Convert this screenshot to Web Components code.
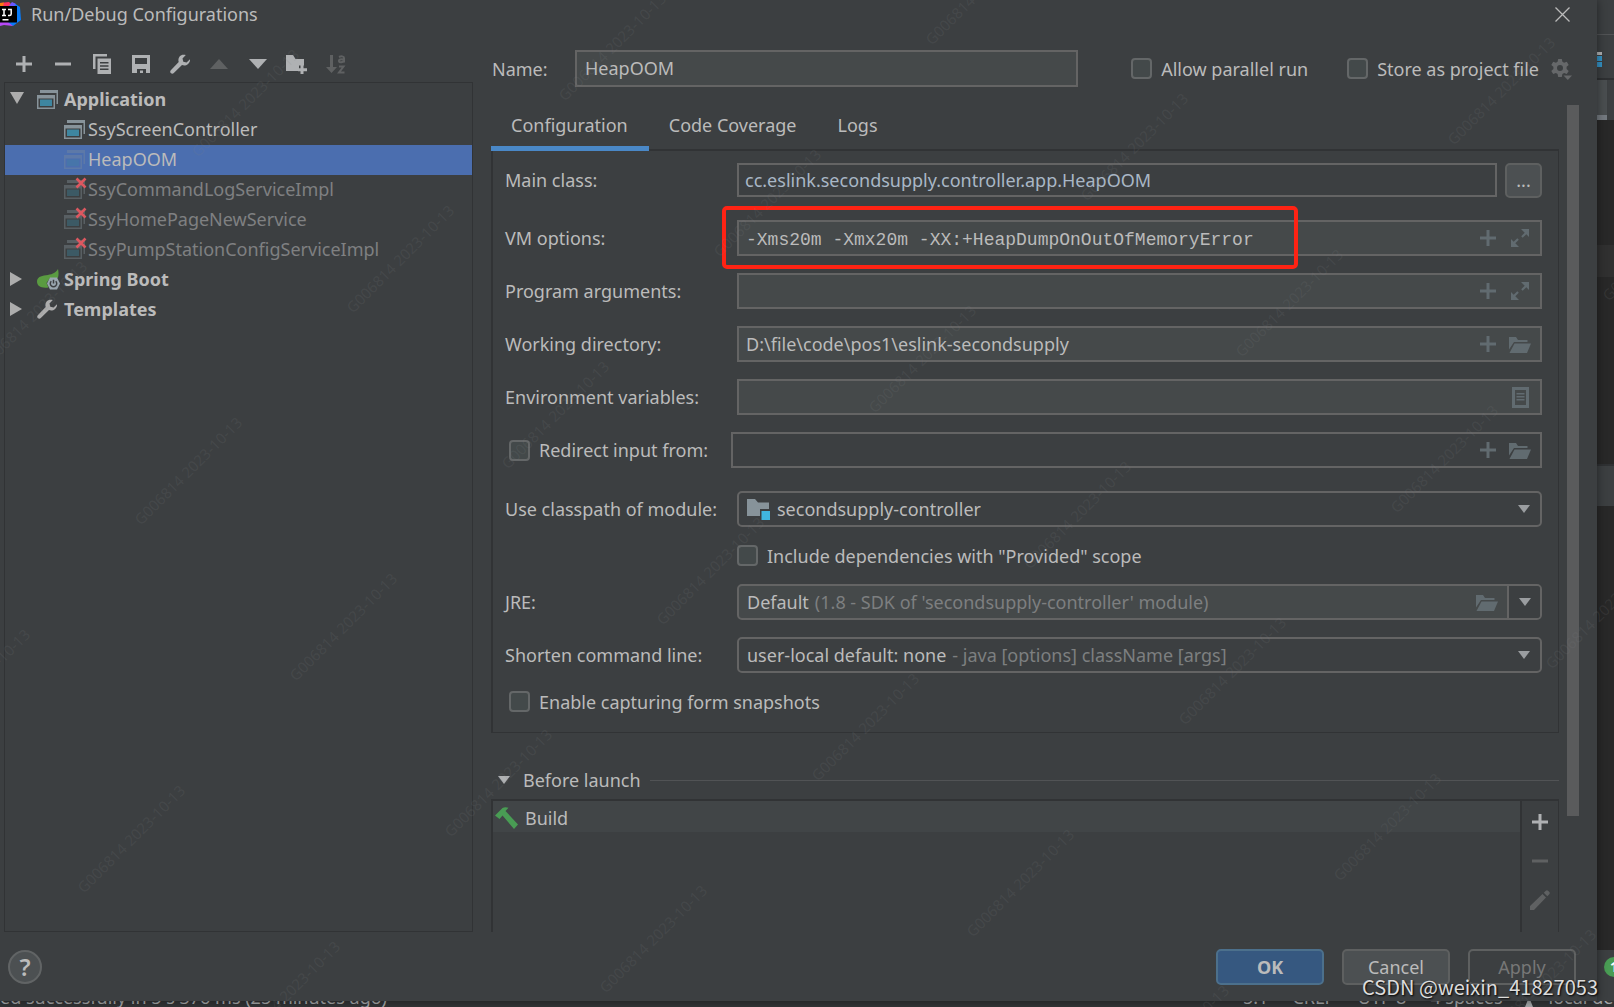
<!DOCTYPE html>
<html lang="en">
<head>
<meta charset="utf-8">
<title>Run/Debug Configurations</title>
<style>
  html, body { height: 100%; }
  body { margin: 0; background: #2b2b2b; }
</style>
</head>
<body>
<ide-desktop></ide-desktop>

<script>
const BASE = `
  *, *::before, *::after { box-sizing: border-box; }
  button, input, select { font: inherit; color: inherit; margin: 0; padding: 0; border: 0; background: none; outline: 0; appearance: none; border-radius: 0; }
  button { display: inline-flex; align-items: center; justify-content: center; }
`;

function define(name, template, setup) {
  customElements.define(name, class extends HTMLElement {
    connectedCallback() {
      if (this.shadowRoot) return;
      const root = this.attachShadow({ mode: 'open' });
      root.innerHTML = `<style>${BASE}</style>` + (typeof template === 'function' ? template(this) : template);
      if (setup) setup(this, root);
    }
  });
}

/* ---------- icons ---------- */
const APP = `<path fill="#87939a" d="M3 1h18v14h-1.500V4H3z"/><path fill="#87939a" fill-rule="evenodd" d="M0 6h18v14H0zM1.500 9.500v9h15v-9z"/><path fill="#3e86a0" d="M3 10.500h12v6.500H3z"/>`;
const FOLDER_OPEN = `<path d="M1 3h7l2 3h9.500v2H6L1 15.500z"/><path d="M6.500 9.500H23L19 19H1.500z"/>`;
const WRENCH = `<path d="M20 5.200 16.600 8.500 13.300 7.700 12.500 4.400 15.800 1.100C13.400.2 11 .8 9.600 2.500 8.300 4.100 8.100 6 8.700 7.900L.8 16.200c-.8.900-.8 2 0 2.900.9.900 2.100.9 3 0L12 11.100c2 .8 4.300.5 6-1.100 1.600-1.500 2.200-3 2-4.800z"/>`;
const ICONS = {
  plus: [16, 16, `<path d="M6.500 0h3v6.500H16v3H9.500V16h-3V9.500H0v-3h6.500z"/>`],
  minus: [16, 16, `<path d="M0 6.500h16v3H0z"/>`],
  copy: [18, 20, `<path d="M0 0h14v2.500H2.500V15H0z"/><path fill-rule="evenodd" d="M4.500 4.500H18V20H4.500zM7 8v1.500h8.500V8zM7 11.200v1.500h8.500v-1.500zM7 14.500V16h8.500v-1.500z"/>`],
  save: [18, 18, `<path fill-rule="evenodd" d="M0 0h18v18h-4v-4H5v4H0zM3 3v6h12V3z"/><path d="M8 15.500h3V18H8z"/>`],
  wrench: [20, 20, WRENCH],
  up: [18, 10, `<path d="M9 0l9 10H0z"/>`],
  down: [18, 10, `<path d="M0 0h18L9 10z"/>`],
  newfolder: [21, 19, `<path d="M0 0h7l2.500 4H18v6.500h-5V16H0z"/><path d="M14.500 10h3v3.200H21v3h-3.500V19h-3v-2.800H12v-3h2.500z"/>`],
  sort: [20, 19, `<path d="M4 0h3v12h4l-5.500 6L0 12h4z"/><g fill="none" stroke="currentColor" stroke-width="2"><path d="M13 2c2-1 5-1 5 1v4.500M18 4.500c-3-.5-5.500 0-5 1.700.4 1.700 4 1.500 5-.7"/><path d="M13 11.500h4.500L13 17.500h5.500"/></g>`],
  app: [21, 20, APP],
  appdim: [21, 20, `<g opacity=".3">${APP}</g>`],
  appmissing: [23, 22, `<g opacity=".38" transform="translate(0 2)">${APP}</g><path d="M12.500 1.500l9 9M21.500 1.500l-9 9" stroke="#db5860" stroke-width="2.600" fill="none"/>`],
  spring: [23, 21, `<path fill="#5a9b41" d="M21 0c.6 3 1 6-.2 9H13l-3.500 5 2 4.500C4 19.500 0 17 0 12.500 0 8.500 3.500 6.700 9 6.200c5-.5 9.500-2 12-6.200z"/><path fill="#9aa7b0" d="M13 8.500h7l3 6-3 6h-7l-3-6z"/><path d="M14.300 12.200a3.200 3.200 0 1 0 4.400 0M16.500 10.800v3.700" fill="none" stroke="#3c3f41" stroke-width="1.500"/>`],
  triright: [12, 14, `<path d="M0 0l12 7L0 14z"/>`],
  tridown: [14, 12, `<path d="M0 0h14L7 12z"/>`],
  combo: [12, 8, `<path d="M0 0h12L6 8z"/>`],
  expand: [18, 18, `<path d="M10 0h8v8l-2.700-2.700-3.600 3.500-1.500-1.500 3.500-3.600zM0 10l2.700 2.700 3.600-3.500 1.500 1.500-3.500 3.600L8 18H0z"/>`],
  folder: [23, 20, FOLDER_OPEN],
  list: [17, 21, `<path fill-rule="evenodd" d="M0 0h17v21H0zM3 3v15h11V3z"/><path d="M4.500 6h8v1.500h-8zM4.500 9h8v1.500h-8zM4.500 12h8v1.500h-8z"/>`],
  module: [23, 22, `<path fill="#87939a" d="M0 1h8l3 3.500h11V11h-9v7H0z"/><path fill="#40b6e0" d="M14.500 13H23v9h-8.500z"/>`],
  gear: [21, 22, `<path fill-rule="evenodd" d="M7.200 0h3.600l.6 2.800 1.700.9 2.700-1 1.900 3.200-2.100 1.900v2.100l2.100 2-1.900 3.100-2.700-.9-1.700 1-.6 2.900H7.200l-.6-2.900-1.700-1-2.700.9L.3 11.900l2.100-2V7.800L.3 5.900l1.900-3.200 2.700 1 1.700-.9zM9 6a3 3 0 1 0 0 6 3 3 0 0 0 0-6z" transform="translate(0 1)"/><path d="M12.500 17.500H21L16.800 22z"/>`],
  hammer: [23, 22, `<path fill="#499c54" d="M0 8.500 7.500 1C9 0 11.500 0 13.500.8L10.500 4 23 17.500 19 22 7.500 8.500 4.500 12z"/>`],
  pencil: [20, 20, `<path d="M12.500 4 16 7.500 4 20H0v-4zM13.800 2.700 15.800.7c.7-.7 1.600-.7 2.300 0l1.200 1.200c.7.700.7 1.600 0 2.300l-2 2z"/>`],
  close: [15, 15, `<path d="M.5.500l14 14M14.500.5l-14 14" fill="none" stroke="currentColor" stroke-width="1.300"/>`],
  person: [8, 10, `<path d="M4 0l4 10H0z"/>`]
};
define('ui-icon', host => {
  const [w, h, body] = ICONS[host.getAttribute('name')];
  return `<style>:host { display: inline-flex; flex: none; } svg { display: block; fill: currentColor; }</style>
    <svg width="${w}" height="${h}" viewBox="0 0 ${w} ${h}" aria-hidden="true">${body}</svg>`;
});

define('idea-logo', `
  <style>:host { display: block; flex: none; } svg { display: block; }</style>
  <svg width="21" height="24" viewBox="0 0 21 24" aria-hidden="true">
    <path fill="#fe315d" d="M0 1l9-1 4 4-7 12-6 4z"/>
    <path fill="#f97a12" d="M0 1l4-.5L2 8 0 9z"/>
    <path fill="#087cfa" d="M14 1l6 4 1 13-8 6-7-4 3-12z"/>
    <path fill="#6b57ff" d="M12 0l4 2-4 5-4-2z"/>
    <path fill="#b74af7" d="M0 18l8 2 5 4-9-1-4 1z"/>
    <path fill="#000" d="M0 4h17v16.500H0z"/>
    <path fill="none" stroke="#fff" stroke-width="1.500" d="M2 7.500h4M4 7.500v6M2 13.500h4M8 7.500h3.200v4.500q0 1.500-1.700 1.500H8M2.500 17.800h6"/>
  </svg>`);

/* ---------- small controls ---------- */
define('check-box', `
  <style>
    :host { display: block; flex: none; }
    label { display: flex; align-items: center; gap: 9px; height: 21px; white-space: nowrap; }
    input { width: 21px; height: 21px; border: 2px solid #646768; border-radius: 4px; background: #43494a; }
  </style>
  <label><input type="checkbox"><slot></slot></label>`);

define('push-button', host => `
  <style>
    :host { display: block; flex: none; }
    button { width: 108px; height: 36px; border: 2px solid #5e6060; border-radius: 5px; background: #4c5052; }
    .primary { background: #365880; border-color: #4c708c; font-weight: bold; }
    .off { background: none; color: #777; }
  </style>
  <button type="button" class="${host.getAttribute('kind') || ''}"><slot></slot></button>`);

/* ---------- tree ---------- */
define('tree-row', host => {
  const open = host.getAttribute('open');
  return `
  <style>
    :host { display: flex; align-items: center; box-sizing: border-box; height: 30px; padding: 0 0 2px 5px; white-space: nowrap; }
    :host([group]) { font-weight: bold; }
    :host([selected]) { background: #4b6eaf; }
    :host([missing]) { color: #7f8081; }
    .arrow { display: flex; width: 27px; height: 15px; flex: none; color: #adadad; }
    .icon { display: flex; width: 27px; flex: none; color: #adadad; }
    :host([child]) .arrow { width: 54px; }
    :host([child]) .icon { width: 24px; }
    :host([missing]) .icon { padding-bottom: 3px; }
  </style>
  <span class="arrow">${open ? `<ui-icon name="${open === 'yes' ? 'tridown' : 'triright'}"></ui-icon>` : ''}</span>
  <span class="icon"><ui-icon name="${host.getAttribute('icon')}"></ui-icon></span>
  <slot></slot>`;
});

define('config-tree', `
  <style>
    :host { display: flex; flex-direction: column; width: 469px; flex: none; }
    nav { display: flex; height: 36px; color: #afb1b3; }
    nav button { width: 39px; height: 36px; flex: none; }
    nav button:disabled { color: #5f6162; }
    .tree { flex: 1; border: 1px solid #313335; padding-top: 2px; }
  </style>
  <nav aria-label="Configuration actions">
    <button type="button" aria-label="Add"><ui-icon name="plus"></ui-icon></button>
    <button type="button" aria-label="Remove"><ui-icon name="minus"></ui-icon></button>
    <button type="button" aria-label="Copy"><ui-icon name="copy"></ui-icon></button>
    <button type="button" aria-label="Save"><ui-icon name="save"></ui-icon></button>
    <button type="button" aria-label="Edit templates"><ui-icon name="wrench"></ui-icon></button>
    <button type="button" aria-label="Move up" disabled><ui-icon name="up"></ui-icon></button>
    <button type="button" aria-label="Move down"><ui-icon name="down"></ui-icon></button>
    <button type="button" aria-label="New folder"><ui-icon name="newfolder"></ui-icon></button>
    <button type="button" aria-label="Sort" disabled><ui-icon name="sort"></ui-icon></button>
  </nav>
  <div class="tree">
    <tree-row group open="yes" icon="app">Application</tree-row>
    <tree-row child icon="app">SsyScreenController</tree-row>
    <tree-row child selected icon="appdim">HeapOOM</tree-row>
    <tree-row child missing icon="appmissing">SsyCommandLogServiceImpl</tree-row>
    <tree-row child missing icon="appmissing">SsyHomePageNewService</tree-row>
    <tree-row child missing icon="appmissing">SsyPumpStationConfigServiceImpl</tree-row>
    <tree-row group open="no" icon="spring">Spring Boot</tree-row>
    <tree-row group open="no" icon="wrench">Templates</tree-row>
  </div>`);

/* ---------- form rows ---------- */
define('text-row', host => {
  const icons = (host.getAttribute('icons') || '').split(' ').filter(Boolean);
  return `
  <style>
    :host { display: flex; align-items: center; position: relative; }
    label { width: 232px; flex: none; white-space: nowrap; }
    .redirect { display: flex; align-items: center; gap: 9px; width: 226px; padding-left: 4px; }
    .redirect label { width: auto; }
    .redirect input { width: 21px; height: 21px; border: 2px solid #646768; border-radius: 4px; background: #43494a; flex: none; }
    .field { display: flex; align-items: center; flex: 1; min-width: 0; height: 36px; padding: 0 9px 0 7px; border: 2px solid #646464; background: #45494a; }
    :host([plain]) .field { background: none; }
    :host([browse]) .field { height: 34px; padding-left: 6px; color: #a9b7c6; }
    .field input { flex: 1; min-width: 0; height: 30px; }
    :host([mono]) .field input { font-family: "Liberation Mono", "Courier New", monospace; padding-top: 4px; }
    .icons { display: flex; color: #616b70; }
    .icons button { height: 30px; margin-left: 12px; min-width: 16px; }
    .icons button:last-child:not(:only-child) { width: 23px; }
    .icons button:only-child { width: 21px; }
    .more { width: 37px; height: 35px; margin-left: 8px; border: 2px solid #5e6060; border-radius: 5px; background: #4c5052; }
    :host([browse]) { height: 34px; }
  </style>
  ${host.hasAttribute('toggle')
    ? `<span class="redirect"><input type="checkbox" id="t"><label for="t">${host.getAttribute('label')}</label></span>`
    : `<label for="f">${host.getAttribute('label')}</label>`}
  <span class="field"><input id="f" type="text" aria-label="${host.getAttribute('label')}" value="${host.getAttribute('value') || ''}">
  <span class="icons">${icons.map(i => `<button type="button" aria-label="${i}"><ui-icon name="${i}"></ui-icon></button>`).join('')}</span></span>
  ${host.hasAttribute('browse') ? '<button type="button" class="more">...</button>' : ''}
  <slot></slot>`;
});

define('select-row', host => `
  <style>
    :host { display: flex; align-items: center; }
    label { width: 232px; flex: none; white-space: nowrap; }
    .field { display: flex; align-items: center; flex: 1; min-width: 0; height: 36px; border: 2px solid #646464; border-radius: 5px; padding-left: 8px; white-space: nowrap; }
    select { field-sizing: content; height: 30px; flex: none; }
    .hint { color: #7d7f80; padding-left: 6px; }
    .gap { flex: 1; }
    .lead { margin-right: 7px; }
    .folder { color: #616b70; width: 41px; height: 32px; }
    .arrow { display: flex; align-items: center; justify-content: center; width: 33px; height: 32px; color: #9a9da0; }
    :host([editable]) .field { background: #45494a; }
    :host([editable]) .arrow { border-left: 2px solid #646464; background: #3c3f41; border-radius: 0 3px 3px 0; }
  </style>
  <label for="s">${host.getAttribute('label')}</label>
  <span class="field">
    ${host.hasAttribute('icon') ? `<ui-icon class="lead" name="${host.getAttribute('icon')}"></ui-icon>` : ''}
    <select id="s"><option>${host.getAttribute('value')}</option></select>
    <span class="hint"><slot></slot></span><span class="gap"></span>
    ${host.hasAttribute('editable') ? '<button type="button" class="folder" aria-label="Browse"><ui-icon name="folder"></ui-icon></button>' : ''}
    <span class="arrow"><ui-icon name="combo"></ui-icon></span>
  </span>`);

define('config-form', `
  <style>
    :host { display: flex; flex-direction: column; gap: 18px; padding: 12px 16px 20px 12px; border: 2px solid #313335; border-right-width: 1px; border-bottom-width: 1px; }
    .group { display: flex; flex-direction: column; gap: 23px; }
    .fields { display: flex; flex-direction: column; gap: 17px; }
    .callout { position: absolute; left: 217px; top: -14px; bottom: -13px; width: 576px; border: 4px solid #ff2314; border-radius: 5px; pointer-events: none; }
    .indent { padding-left: 4px; }
    .under { padding-left: 232px; }
  </style>
  <div class="group">
    <text-row browse plain label="Main class:" value="cc.eslink.secondsupply.controller.app.HeapOOM"></text-row>
    <div class="fields">
      <text-row mono label="VM options:" icons="plus expand" value="-Xms20m -Xmx20m -XX:+HeapDumpOnOutOfMemoryError"><span class="callout"></span></text-row>
      <text-row label="Program arguments:" icons="plus expand"></text-row>
      <text-row label="Working directory:" icons="plus folder" value="D:\\file\\code\\pos1\\eslink-secondsupply"></text-row>
      <text-row label="Environment variables:" icons="list"></text-row>
      <text-row plain toggle label="Redirect input from:" icons="plus folder"></text-row>
    </div>
    <select-row label="Use classpath of module:" icon="module" value="secondsupply-controller"></select-row>
  </div>
  <check-box class="under">Include dependencies with "Provided" scope</check-box>
  <div class="fields">
    <select-row editable label="JRE:" value="Default">(1.8 - SDK of 'secondsupply-controller' module)</select-row>
    <select-row label="Shorten command line:" value="user-local default: none">- java [options] className [args]</select-row>
  </div>
  <check-box class="indent">Enable capturing form snapshots</check-box>`);

define('tab-strip', `
  <style>
    :host { display: flex; height: 46px; margin-bottom: -2px; position: relative; }
    button { padding: 0 21px 2px 20px; border-bottom: 5px solid transparent; white-space: nowrap; }
    .on { border-color: #4a88c7; }
  </style>
  <button type="button" class="on">Configuration</button>
  <button type="button">Code Coverage</button>
  <button type="button">Logs</button>`);

define('before-launch', `
  <style>
    :host { display: flex; flex-direction: column; flex: 1; min-height: 0; padding-top: 35px; }
    header { display: flex; align-items: center; height: 24px; gap: 13px; padding-left: 7px; margin-bottom: 7px; }
    header ui-icon { color: #afb1b3; }
    header i { flex: 1; height: 1px; background: #515355; margin-left: -4px; }
    .box { display: flex; flex: 1; min-height: 0; overflow: hidden; border: 2px solid #313335; border-right-width: 1px; border-bottom: 0; }
    .list { flex: 1; }
    .item { display: flex; align-items: center; height: 31px; gap: 7px; padding: 2px 0 0 2px; background: #414547; }
    .side { display: flex; flex-direction: column; width: 38px; padding-top: 1px; border-left: 2px solid #313335; color: #afb1b3; }
    .side button { height: 39px; flex: none; }
    .side button:disabled { color: #5f6162; }
  </style>
  <header><ui-icon name="combo"></ui-icon><span>Before launch</span><i></i></header>
  <div class="box">
    <div class="list"><div class="item"><ui-icon name="hammer"></ui-icon><span>Build</span></div></div>
    <div class="side">
      <button type="button" aria-label="Add"><ui-icon name="plus"></ui-icon></button>
      <button type="button" aria-label="Remove" disabled><ui-icon name="minus"></ui-icon></button>
      <button type="button" aria-label="Edit" disabled><ui-icon name="pencil"></ui-icon></button>
    </div>
  </div>`);

define('config-editor', `
  <style>
    :host { display: flex; flex-direction: column; flex: 1; min-width: 0; padding-top: 4px; gap: 18px; }
    .top { display: flex; align-items: center; height: 37px; padding: 0 7px 0 1px; }
    .top label { width: 83px; flex: none; }
    .top > input { flex: 1; min-width: 0; height: 37px; padding: 0 8px 2px; border: 2px solid #646464; background: #45494a; margin-right: 53px; }
    .top check-box + check-box { margin-left: 39px; }
    .gear { margin-left: 12px; color: #66686a; }
    .scroll { display: flex; flex: 1; min-height: 0; gap: 8px; }
    .content { display: flex; flex-direction: column; flex: 1; min-width: 0; min-height: 0; }
    .bar { width: 12px; height: 86%; background: #5a5b5c; }
  </style>
  <div class="top">
    <label for="name">Name:</label><input id="name" type="text" value="HeapOOM">
    <check-box>Allow parallel run</check-box><check-box>Store as project file</check-box>
    <button type="button" class="gear" aria-label="Storage settings"><ui-icon name="gear"></ui-icon></button>
  </div>
  <div class="scroll">
    <div class="content">
      <tab-strip></tab-strip>
      <config-form></config-form>
      <before-launch></before-launch>
    </div>
    <div class="bar"></div>
  </div>`);

define('run-dialog', `
  <style>
    :host { display: flex; flex-direction: column; min-width: 0; min-height: 0; background: #3c3f41; box-shadow: 0 0 9px rgba(0,0,0,.45); position: relative; }
    header { display: flex; align-items: center; height: 28px; gap: 10px; padding-right: 27px; flex: none; }
    header span { flex: 1; }
    main { display: flex; flex: 1; min-height: 0; gap: 18px; padding: 18px 18px 0 4px; }
    footer { display: flex; align-items: center; gap: 18px; height: 69px; flex: none; padding: 0 21px 0 8px; }
    .help { width: 34px; height: 34px; border-radius: 50%; border: 2px solid #616465; background: #4c5052; font-size: 24px; line-height: 24px; font-weight: 600; margin-right: auto; }
  </style>
  <header><idea-logo></idea-logo><span>Run/Debug Configurations</span>
    <button type="button" aria-label="Close"><ui-icon name="close"></ui-icon></button></header>
  <main><config-tree></config-tree><config-editor></config-editor></main>
  <footer>
    <button type="button" class="help" aria-label="Help">?</button>
    <push-button kind="primary">OK</push-button><push-button>Cancel</push-button><push-button kind="off">Apply</push-button>
  </footer>`);

/* ---------- window behind the dialog ---------- */
define('editor-edge', `
  <style>
    :host { display: flex; flex-direction: column; background: #282828; overflow: hidden; }
    div { flex: none; }
    .a { height: 35px; background: #3c3f41; border-bottom: 1px solid #515355; }
    .b { display: flex; flex-direction: column; gap: 1px; height: 45px; padding-top: 17px; background: #3c3f41; border-bottom: 2px solid #2e3032; }
    .b i { width: 5px; height: 5px; background: #3592c4; } .b i:first-child { height: 3px; background: #afb1b3; }
    .c { height: 40px; background: linear-gradient(#747a80, #747a80) 0 100% / 10px 5px no-repeat, linear-gradient(#4a4e50, #4a4e50) 0 0 / 10px 100% no-repeat, #3c3f41; }
    .d { height: 125px; } .e { height: 32px; background: #303030; } .f { height: 187px; }
    .g { height: 42px; background: #3c3f41; border-top: 2px solid #2f3133; }
    .h { flex: 1; }
    .i { height: 51px; background: #3c3f41; padding: 7px 0 0 7px; }
    .i b { display: block; width: 20px; height: 20px; border-radius: 50%; background: #499c54; color: #fff; font-size: 14px; line-height: 20px; text-align: center; }
  </style>
  <div class="a"></div><div class="b"><i></i><i></i><i></i></div><div class="c"></div>
  <div class="d"></div><div class="e"></div><div class="f"></div><div class="g"></div><div class="h"></div>
  <div class="i"><b>1</b></div>`);

define('status-bar', `
  <style>
    :host { display: flex; align-items: flex-end; justify-content: space-between; height: 6px; overflow: hidden; background: #323436; line-height: 20px; color: #a5a7a9; white-space: nowrap; }
    .right { display: flex; align-items: flex-end; gap: 24px; width: 371px; flex: none; }
    .right ui-icon { margin: 0 -8px 0 -2px; }
  </style>
  <span>ed successfully in 5 s 376 ms (25 minutes ago)</span>
  <span class="right"><span>5:1</span><span>CRLF</span><span>UTF-8</span><span>4 spaces</span><ui-icon name="person"></ui-icon><span>local dev</span></span>`);

/* faint diagonal stamp repeated over the whole screen */
define('screen-stamp', `
  <style>
    :host { position: absolute; inset: 0; overflow: hidden; pointer-events: none; }
    svg { display: block; width: 100%; height: 100%; }
    text { font-size: 15px; fill: rgba(128,130,132,.15); }
  </style>
  <svg aria-hidden="true"></svg>`, (host, root) => {
  const svg = root.querySelector('svg'), out = [];
  for (let i = -8; i < 14; i++) for (let j = -8; j < 14; j++) {
    const x = Math.round(141 + i * 155 + j * 212), y = Math.round(526 + i * 156 - j * 212);
    if (x < -100 || y < 0 || x > innerWidth || y > innerHeight + 100) continue;
    out.push(`<text x="${x}" y="${y}" transform="rotate(-45 ${x} ${y})">G006814 2023-10-13</text>`);
  }
  svg.innerHTML = out.join('');
});

define('ide-desktop', `
  <style>
    :host { display: grid; grid-template: minmax(0, 1fr) auto / minmax(0, 1fr) 17px; height: 100vh; position: relative; overflow: hidden;
      font: 18px/24px "Noto Sans", "Open Sans", sans-serif; color: #bbbbbb; }
    status-bar { grid-column: 1 / 3; }
    .credit { position: absolute; right: 16px; bottom: 6px; font: 20px/29px "Noto Sans CJK SC", sans-serif; color: #dcdcdc; text-shadow: 1px 1px 2px #000; }
  </style>
  <run-dialog></run-dialog><editor-edge></editor-edge><status-bar></status-bar>
  <screen-stamp></screen-stamp>
  <span class="credit">CSDN @weixin_41827053</span>`);
</script>
</body>
</html>
